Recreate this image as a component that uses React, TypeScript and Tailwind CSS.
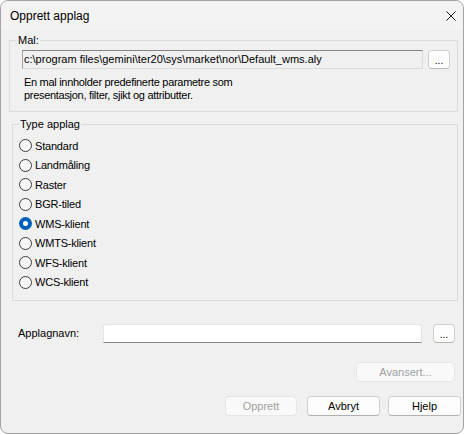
import { useState } from "react";

const TYPES = [
  "Standard",
  "Landmåling",
  "Raster",
  "BGR-tiled",
  "WMS-klient",
  "WMTS-klient",
  "WFS-klient",
  "WCS-klient",
];

function Radio({ checked }: { checked: boolean }) {
  return checked ? (
    <span className="w-[13px] h-[13px] rounded-full bg-[#005fb8] flex items-center justify-center shrink-0">
      <span className="w-[5px] h-[5px] rounded-full bg-white" />
    </span>
  ) : (
    <span className="w-[13px] h-[13px] rounded-full border border-[#3c3c3c] bg-[#f7f7f7] shrink-0" />
  );
}

function DotsButton() {
  return (
    <button className="w-[22px] h-[19px] rounded-[4px] border border-[#d0d0d0] border-b-[#b8b8b8] bg-[#fdfdfd] text-[10px] leading-[12px] pt-[3px] text-black shrink-0">
      ...
    </button>
  );
}

function Button({ label, disabled, width }: { label: string; disabled?: boolean; width: string }) {
  return (
    <button
      className={`${width} h-[20px] rounded-[4px] border text-[11px] leading-[16px] ${
        disabled
          ? "bg-[#f9f9f9] border-[#e6e6e6] text-[#a0a0a0]"
          : "bg-[#fdfdfd] border-[#d0d0d0] border-b-[#b0b0b0] text-black"
      }`}
    >
      {label}
    </button>
  );
}

export default function App() {
  const [type, setType] = useState("WMS-klient");

  return (
    <div className="w-[464px] h-[434px] rounded-lg border border-[#a3a3a3] bg-[#f0f0f0] overflow-hidden flex flex-col font-['Liberation_Sans',Arial,sans-serif] text-[11px] text-black">
      <div className="h-[29px] bg-[#f3f3f3] flex items-center justify-between pl-[9px] pr-[7px] shrink-0">
        <span className="text-[12px]">Opprett applag</span>
        <svg width="10" height="10" viewBox="0 0 10 10" className="mt-[1px]">
          <path d="M0.5 0.5 L9.5 9.5 M9.5 0.5 L0.5 9.5" stroke="#1a1a1a" strokeWidth="1" />
        </svg>
      </div>

      <fieldset className="ml-[8px] mr-[5px] mt-[4px] border border-[#dcdcdc] pl-[12px] pr-[7px] pb-[9px]">
        <legend className="-ml-[5px] px-[1px] leading-[13px]">Mal:</legend>
        <div className="flex items-center gap-[5px] mt-[3px]">
          <div className="w-[401px] h-[19px] border border-[#dadada] border-t-[#858585] border-l-[#a0a0a0] bg-[#f0f0f0] pl-[1px] leading-[17px] whitespace-nowrap overflow-hidden">
            c:\program files\gemini\ter20\sys\market\nor\Default_wms.aly
          </div>
          <DotsButton />
        </div>
        <p className="mt-[7px] ml-[2px] leading-[13px] tracking-[-0.3px]">
          En mal innholder predefinerte parametre som
          <br />
          presentasjon, filter, sjikt og attributter.
        </p>
      </fieldset>

      <fieldset className="ml-[11px] mr-[5px] mt-[6px] border border-[#dcdcdc] pl-[6px] pt-[5px] pb-[8px]">
        <legend className="ml-0 px-[1px] leading-[13px]">Type applag</legend>
        {TYPES.map((t) => (
          <label
            key={t}
            className="h-[19.5px] flex items-center gap-[3px] cursor-default"
            onClick={() => setType(t)}
          >
            <Radio checked={type === t} />
            <span className="tracking-[-0.2px]">{t}</span>
          </label>
        ))}
      </fieldset>

      <div className="flex items-center mt-[23px] pl-[17px] mr-[8px]">
        <span className="w-[85px]">Applagnavn:</span>
        <div className="w-[319px] h-[19px] bg-white border border-[#e5e5e5] border-b-[#868686] rounded-t-[3px]" />
        <div className="ml-auto">
          <DotsButton />
        </div>
      </div>

      <div className="flex justify-end mt-[19px] mr-[8px]">
        <Button label="Avansert..." disabled width="w-[99px]" />
      </div>

      <div className="flex justify-end mt-[14px] mr-[2px]">
        <Button label="Opprett" disabled width="w-[72px]" />
        <div className="ml-[10px]">
          <Button label="Avbryt" width="w-[73px]" />
        </div>
        <div className="ml-[8px]">
          <Button label="Hjelp" width="w-[73px]" />
        </div>
      </div>
    </div>
  );
}
